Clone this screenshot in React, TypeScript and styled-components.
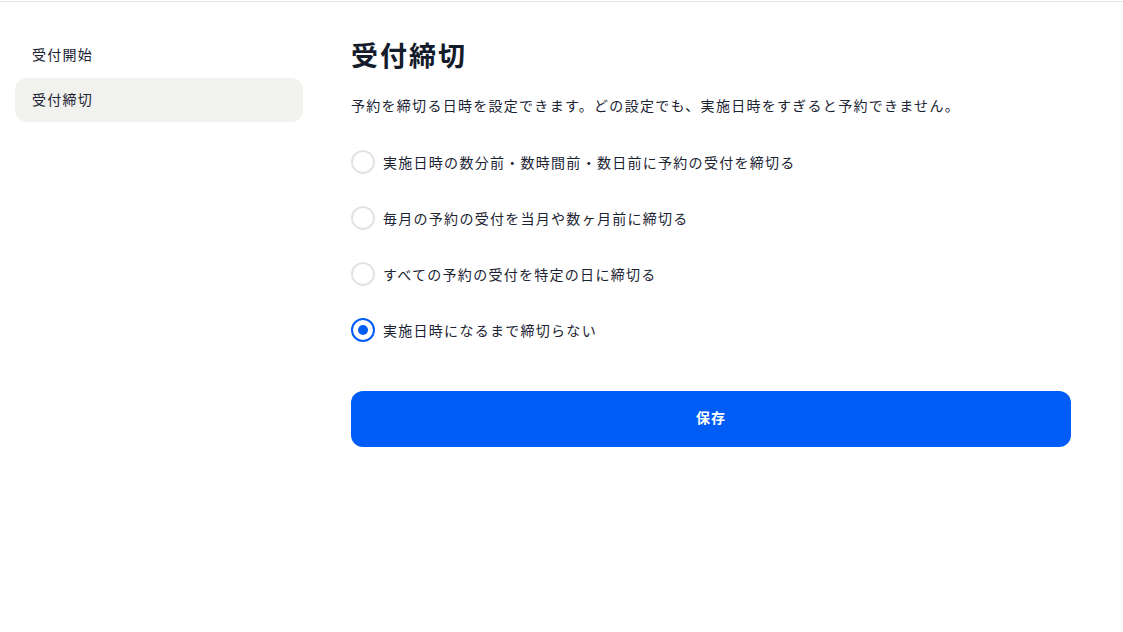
import React, { useState } from "react";
import styled, { createGlobalStyle } from "styled-components";

const Global = createGlobalStyle`
  html, body { margin: 0; padding: 0; background: #ffffff; }
  body {
    font-family: "Noto Sans CJK JP", "Noto Sans", sans-serif;
    color: #1b2333;
    letter-spacing: 0.08em;
  }
`;

const Page = styled.div`
  margin-top: 1px;
  border-top: 1px solid #e6e6e6;
  display: flex;
  min-height: 630px;
  box-sizing: border-box;
`;

const Sidebar = styled.nav`
  width: 288px;
  padding: 31px 0 0 15px;
  display: flex;
  flex-direction: column;
  gap: 1px;
`;

const NavItem = styled.div<{ $active?: boolean }>`
  height: 44px;
  box-sizing: border-box;
  padding: 0 0 2px 17px;
  display: flex;
  align-items: center;
  border-radius: 12px;
  font-size: 14px;
  background: ${(p) => (p.$active ? "#f1f1ed" : "transparent")};
  color: #1b2333;
`;

const Main = styled.main`
  margin-left: 48px;
  width: 720px;
  padding-top: 35px;
  display: flex;
  flex-direction: column;
`;

const Title = styled.h1`
  margin: 0;
  font-size: 27px;
  line-height: 36px;
  font-weight: 700;
  letter-spacing: 2px;
  color: #141c2b;
`;

const Description = styled.p`
  margin: 21px 0 0;
  font-size: 14px;
  line-height: 22px;
  color: #1b2333;
`;

const RadioList = styled.div`
  margin-top: 18px;
  display: flex;
  flex-direction: column;
`;

const RadioRow = styled.label`
  height: 56px;
  display: flex;
  align-items: center;
  gap: 8px;
  font-size: 14px;
  cursor: pointer;
`;

const RadioCircle = styled.span<{ $checked?: boolean }>`
  width: 24px;
  height: 24px;
  box-sizing: border-box;
  border-radius: 50%;
  border: 2px solid ${(p) => (p.$checked ? "#005cf6" : "#e3e3e1")};
  display: flex;
  align-items: center;
  justify-content: center;
  flex-shrink: 0;
  &::after {
    content: "";
    width: 10px;
    height: 10px;
    border-radius: 50%;
    background: #005cf6;
    display: ${(p) => (p.$checked ? "block" : "none")};
  }
`;

const SaveButton = styled.button`
  margin-top: 33px;
  height: 56px;
  width: 100%;
  padding: 0 0 5px;
  border: none;
  border-radius: 12px;
  background: #005cf6;
  color: #ffffff;
  font-family: "Noto Sans CJK JP", sans-serif;
  font-size: 14px;
  font-weight: 700;
  letter-spacing: 0.08em;
`;

const options = [
  "実施日時の数分前・数時間前・数日前に予約の受付を締切る",
  "毎月の予約の受付を当月や数ヶ月前に締切る",
  "すべての予約の受付を特定の日に締切る",
  "実施日時になるまで締切らない",
];

export default function App() {
  const [selected, setSelected] = useState(3);
  return (
    <>
      <Global />
      <Page>
        <Sidebar>
          <NavItem>受付開始</NavItem>
          <NavItem $active>受付締切</NavItem>
        </Sidebar>
        <Main>
          <Title>受付締切</Title>
          <Description>
            予約を締切る日時を設定できます。どの設定でも、実施日時をすぎると予約できません。
          </Description>
          <RadioList>
            {options.map((o, i) => (
              <RadioRow key={o} onClick={() => setSelected(i)}>
                <RadioCircle $checked={selected === i} />
                {o}
              </RadioRow>
            ))}
          </RadioList>
          <SaveButton>保存</SaveButton>
        </Main>
      </Page>
    </>
  );
}
